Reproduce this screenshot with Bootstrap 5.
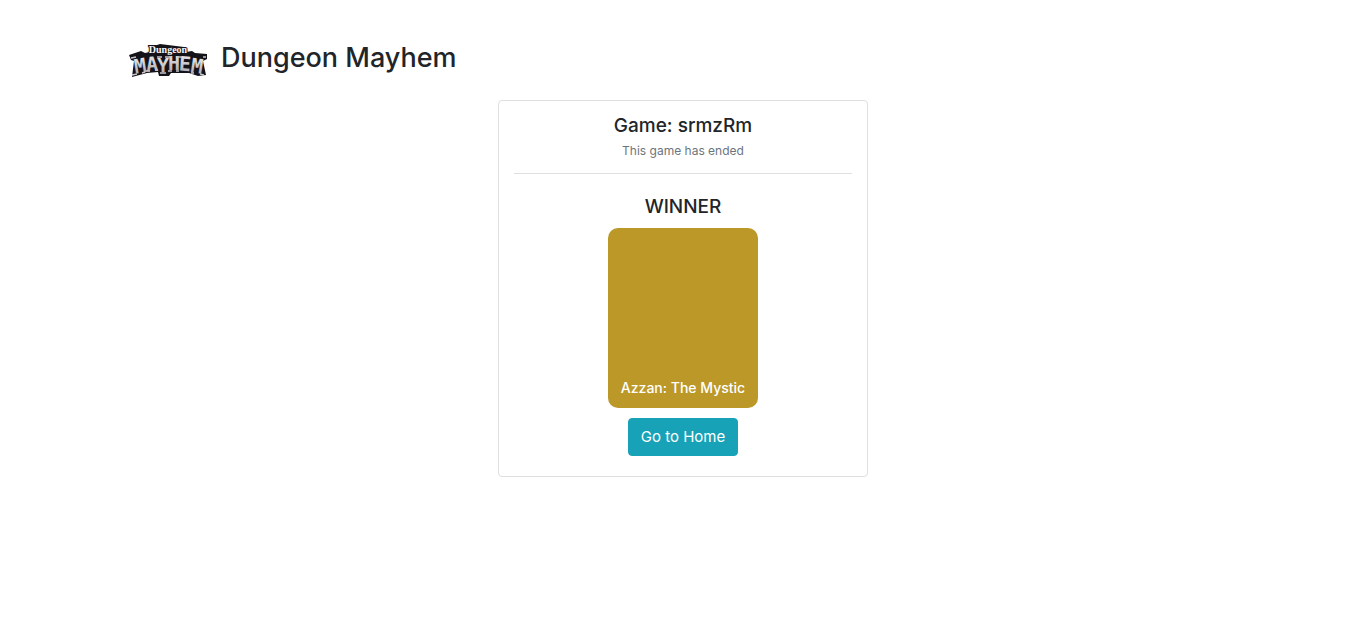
<!DOCTYPE html>
<html lang="en">
<head>
<meta charset="utf-8">
<meta name="viewport" content="width=device-width, initial-scale=1">
<title>Dungeon Mayhem</title>
<link rel="stylesheet" href="https://cdn.jsdelivr.net/npm/bootstrap@5.3.0/dist/css/bootstrap.min.css">
<style>
  body { font-family: Inter, "Liberation Sans", sans-serif; color: #212529; }
  .page { padding: 40px 15px 24px; }
  .brand-bar { gap: 13px; margin-bottom: 22px; }
  .brand-logo { width: 80px; height: 38px; flex: none; }
  .brand-logo text { font-weight: 700; text-anchor: middle; }
  .logo-big { font-family: "DejaVu Sans Mono", monospace; font-size: 20px; }
  .logo-small { font-family: "Liberation Serif", serif; font-size: 10px; }
  .brand-title { font-size: 27px; line-height: 36px; }
  .game-col { padding: 0; }
  .game-card { border-color: #dfdfdf; border-radius: 4px; padding: 12px 15px 20px; }
  .game-name { font-size: 19px; line-height: 26px; }
  .game-note { margin: 3px 0 0; font-size: 12px; line-height: 18px; color: #6c757d; }
  .rule { border-color: #000; opacity: .12; margin: 13px 0 20px; }
  .hero { width: 150px; height: 180px; margin-bottom: 10px; padding-bottom: 10px; border-radius: 10px; background: #bb9828; font-size: 14px; line-height: 20px; }
  .btn-home { --bs-btn-font-size: 15px; --bs-btn-bg: #17a2b8; --bs-btn-border-color: #17a2b8; --bs-btn-color: #fff; --bs-btn-hover-bg: #138496; --bs-btn-hover-color: #fff; --bs-btn-border-radius: 4px; line-height: 24px; }
</style>
</head>
<body>
<main class="container page">
  <header class="brand-bar d-flex align-items-start">
    <svg class="brand-logo" viewBox="0 0 80 38" role="img" aria-label="Dungeon Mayhem logo">
      <defs>
        <linearGradient id="steel" x1="0" y1="0" x2="0" y2="1">
          <stop offset="0" stop-color="#f0f0f2"/><stop offset="1" stop-color="#a4a2a8"/>
        </linearGradient>
      </defs>
      <path d="M1 15 13 11 17 13 22 12 21 5 29 5 32 4 56 7 58 12 64 11 67 13 79 14 79 19 75 21 78 35 70 36 61 33 52 33 43 33 41 36 31 36 30 32 19 33 4 37 6 21 3 20Z" fill="#15131a"/>
      <g class="logo-big" fill="url(#steel)">
        <text x="12" y="33" transform="rotate(-9 12 26)">M</text>
        <text x="24" y="31" transform="rotate(-4 24 24)">A</text>
        <text x="35" y="32">Y</text>
        <text x="46" y="30">H</text>
        <text x="57" y="31" transform="rotate(4 57 24)">E</text>
        <text x="69" y="33" transform="rotate(9 69 26)">M</text>
      </g>
      <path d="M3 18l5-1M75 17l3 0M4 35l5-1M14 33l3-1M18 31l4 0M27 30l3 0M32 33l6 0M40 31l4 0M48 31l3 0M63 33l3 0M72 34l4 1M29 17l5 0M37 17l7 0M49 17l4 0" fill="none" stroke="#c5c4c9" stroke-width="1.5"/>
      <text class="logo-small" x="40" y="13" fill="#f5f5f7" stroke="#15131a" stroke-width="2" paint-order="stroke">Dungeon</text>
    </svg>
    <h1 class="brand-title mb-0">Dungeon Mayhem</h1>
  </header>
  <div class="row justify-content-center mx-0">
    <div class="col-12 col-md-6 col-lg-4 game-col">
      <section class="card game-card text-center">
        <h2 class="game-name mb-0">Game: srmzRm</h2>
        <p class="game-note">This game has ended</p>
        <hr class="rule">
        <h3 class="game-name mb-2">WINNER</h3>
        <div class="hero mx-auto d-flex align-items-end justify-content-center text-white fw-medium">Azzan: The Mystic</div>
        <div><button type="button" class="btn btn-home">Go to Home</button></div>
      </section>
    </div>
  </div>
</main>
<script src="https://cdn.jsdelivr.net/npm/bootstrap@5.3.0/dist/js/bootstrap.bundle.min.js"></script>
</body>
</html>
